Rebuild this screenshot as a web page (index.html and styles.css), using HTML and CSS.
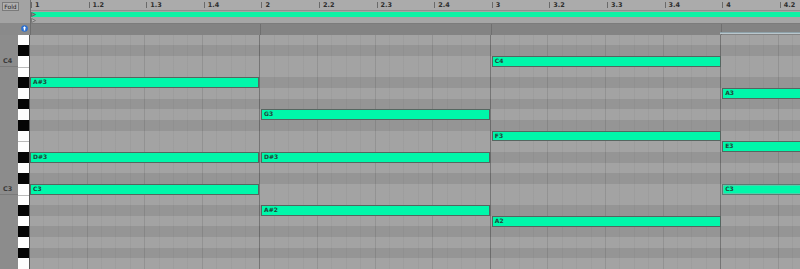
FILE: index.html
```html
<!DOCTYPE html>
<html>
<head>
<meta charset="utf-8">
<link rel="stylesheet" href="styles.css">
</head>
<body>
<div class="app">
  <div class="header">
    <div class="corner">
      <div class="corner-top"><span class="fold">Fold</span></div>
      <div class="corner-strip"><span class="blue-icon"><svg width="7" height="7" viewBox="0 0 7 7"><circle cx="3.5" cy="3.5" r="3.3" fill="#2a6fd0"/><path d="M3.5 1.3 L5.3 3.3 H4.2 V5.6 H2.8 V3.3 H1.7 Z" fill="#ffffff"/></svg></span></div>
    </div>
    <div class="timeline">
      <div class="ruler">
        <span class="beat">1</span><span class="beat">1.2</span><span class="beat">1.3</span><span class="beat">1.4</span>
        <span class="beat">2</span><span class="beat">2.2</span><span class="beat">2.3</span><span class="beat">2.4</span>
        <span class="beat">3</span><span class="beat">3.2</span><span class="beat">3.3</span><span class="beat">3.4</span>
        <span class="beat">4</span><span class="beat">4.2</span>
      </div>
      <div class="loop"><div class="loop-bar"><svg class="tri" width="5" height="5" viewBox="0 0 5 5"><path d="M0.5 0.5 L4.5 2.5 L0.5 4.5 Z" fill="#8a8a8a" stroke="#5a5a5a" stroke-width="0.8"/></svg></div></div>
      <div class="markers"><svg class="tri" width="5" height="5" viewBox="0 0 5 5"><path d="M0.5 0.5 L4.5 2.5 L0.5 4.5 Z" fill="#b5b5b5" stroke="#6a6a6a" stroke-width="0.8"/></svg></div>
      <div class="strip"><div class="end-line"></div></div>
    </div>
  </div>
  <div class="body">
    <div class="gutter">
      <div class="g"></div><div class="g"></div><div class="g c">C4</div><div class="g"></div>
      <div class="g"></div><div class="g"></div><div class="g"></div><div class="g"></div>
      <div class="g"></div><div class="g"></div><div class="g"></div><div class="g"></div>
      <div class="g"></div><div class="g"></div><div class="g c">C3</div><div class="g"></div>
      <div class="g"></div><div class="g"></div><div class="g"></div><div class="g"></div>
      <div class="g"></div><div class="g"></div><div class="g"></div>
    </div>
    <div class="keys">
      <div class="k w"></div><div class="k b"></div><div class="k w"></div><div class="k w sep"></div>
      <div class="k b"></div><div class="k w"></div><div class="k b"></div><div class="k w"></div>
      <div class="k b"></div><div class="k w"></div><div class="k w sep"></div><div class="k b"></div>
      <div class="k w"></div><div class="k b"></div><div class="k w"></div><div class="k w sep"></div>
      <div class="k b"></div><div class="k w"></div><div class="k b"></div><div class="k w"></div>
      <div class="k b"></div><div class="k w"></div><div class="k w sep"></div>
    </div>
    <div class="grid">
      <div class="row l"></div><div class="row d"></div><div class="row l"></div><div class="row l"></div>
      <div class="row d"></div><div class="row l"></div><div class="row d"></div><div class="row l"></div>
      <div class="row d"></div><div class="row l"></div><div class="row l"></div><div class="row d"></div>
      <div class="row l"></div><div class="row d"></div><div class="row l"></div><div class="row l"></div>
      <div class="row d"></div><div class="row l"></div><div class="row d"></div><div class="row l"></div>
      <div class="row d"></div><div class="row l"></div><div class="row l"></div>

      <div class="note" style="left:461.8px;top:21.33px">C4</div>
      <div class="note" style="left:0px;top:42.67px">A#3</div>
      <div class="note out" style="left:692.2px;top:53.33px">A3</div>
      <div class="note" style="left:231px;top:74.67px">G3</div>
      <div class="note" style="left:461.8px;top:96px">F3</div>
      <div class="note out" style="left:692.2px;top:106.67px">E3</div>
      <div class="note" style="left:0px;top:117.33px">D#3</div>
      <div class="note" style="left:231px;top:117.33px">D#3</div>
      <div class="note" style="left:0px;top:149.33px">C3</div>
      <div class="note out sel" style="left:692.2px;top:149.33px">C3</div>
      <div class="note" style="left:231px;top:170.67px">A#2</div>
      <div class="note" style="left:461.8px;top:181.33px">A2</div>
    </div>
  </div>
</div>
</body>
</html>
```

FILE: styles.css
```css
* { box-sizing: border-box; }
html, body { margin: 0; padding: 0; }
body {
  width: 800px;
  height: 269px;
  overflow: hidden;
  background: #9c9c9c;
  font-family: "DejaVu Sans", "Liberation Sans", sans-serif;
  font-size: 7px;
  color: #222;
}
.app { width: 800px; height: 269px; display: flex; flex-direction: column; }

.header { display: flex; height: 34.67px; flex: none; }
.corner {
  width: 31px;
  flex: none;
  display: flex;
  flex-direction: column;
  background: #a3a3a3;
  border-right: 1px solid #6e6e6e;
}
.corner-top { height: 23px; padding: 2px 0 0 2px; }
.fold {
  display: inline-block;
  width: 17px;
  height: 9px;
  border: 1px solid #7a7a7a;
  background: #b0b0b0;
  font-size: 6px;
  line-height: 7px;
  text-align: center;
  color: #222;
}
.corner-strip {
  flex: 1;
  background: #8a8a8a;
  display: flex;
  justify-content: flex-end;
  align-items: flex-start;
  padding: 2px 2px 0 0;
}
.blue-icon { width: 7px; height: 7px; display: block; }
.blue-icon svg { display: block; }

.timeline { flex: 1; display: flex; flex-direction: column; }
.ruler {
  height: 11px;
  display: flex;
  background: #ababab;
  border-bottom: 1px solid #8e8e8e;
}
.beat {
  width: 57.6px;
  flex: none;
  padding-left: 3px;
  font-size: 6.5px;
  font-weight: bold;
  line-height: 7px;
  color: #2e2e2e;
  border-left: 1px solid #6a6a6a;
  height: 6px;
  margin-top: 2px;
}
.loop {
  height: 6px;
  background: #a5a5a5;
  padding-top: 1px;
}
.loop-bar {
  height: 5px;
  background: #0cf2a4;
  display: flex;
  align-items: center;
}
.tri { display: block; flex: none; }
.markers {
  height: 6px;
  background: #a6a6a6;
  padding-top: 1px;
}
.strip {
  flex: 1;
  background: #838383;
  position: relative;
  border-top: 1px solid #7c7c7c;
  background-image: repeating-linear-gradient(to right, transparent 0 229.4px, rgba(0,0,0,.15) 229.4px 230.4px);
}
.end-line {
  position: absolute;
  left: 689px;
  right: 0;
  top: 7.5px;
  height: 2px;
  background: #b9c6cc;
  border-top: 1px solid #8fa2aa;
}

.body { flex: 1; display: flex; }
.gutter {
  width: 18px;
  flex: none;
  background: #8c8c8c;
  display: flex;
  flex-direction: column;
}
.g { height: 10.667px; flex: none; }
.g.c {
  font-size: 6.5px;
  font-weight: bold;
  line-height: 10px;
  padding-left: 3px;
  color: #3a3a3a;
  border-bottom: 1px solid #7a7a7a;
}
.keys {
  width: 12px;
  flex: none;
  display: flex;
  flex-direction: column;
  border-right: 1px solid #555;
}
.k { height: 10.667px; flex: none; }
.k.w { background: #fdfdfd; }
.k.b { background: #050505; }
.k.sep { border-top: 1px solid #b8b8b8; }

.grid {
  flex: 1;
  position: relative;
  display: flex;
  flex-direction: column;
  overflow: hidden;
}
.row {
  height: 10.667px;
  flex: none;
  background-image:
    repeating-linear-gradient(to right, transparent 0 229.4px, rgba(0,0,0,.2) 229.4px 230.4px),
    repeating-linear-gradient(to right, transparent 0 56.6px, rgba(0,0,0,.07) 56.6px 57.6px),
    repeating-linear-gradient(to right, transparent 0 13.4px, rgba(0,0,0,.035) 13.4px 14.4px);
}
.row.l { background-color: #a3a3a3; }
.row.d { background-color: #959595; }

.note {
  position: absolute;
  width: 229.4px;
  height: 10.667px;
  background: #00f7aa;
  border: 1px solid #556660;
  font-size: 6px;
  font-weight: bold;
  line-height: 8px;
  padding-left: 2px;
  color: #20463a;
  white-space: nowrap;
}
.note.sel { border: 1px solid #5d7a73; box-shadow: inset 0 0 0 0.5px #9aa; }
```
